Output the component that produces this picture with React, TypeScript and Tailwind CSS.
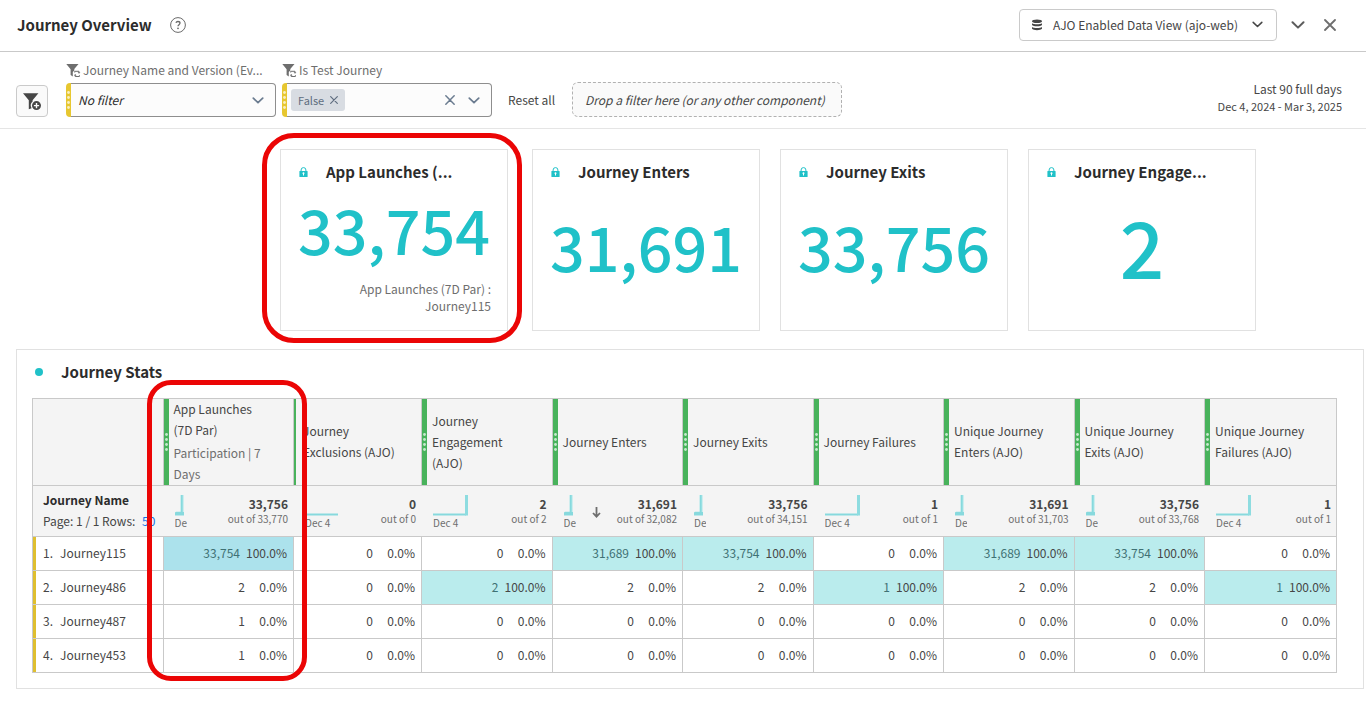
import React from "react";

type Spark = "peak" | "step" | "flat";

interface Metric {
  lines: string[];
  note?: string[];
  spark: Spark;
  axis: string;
  total: string;
  outOf: string;
  sorted?: boolean;
  cells: [string, string][];
}

const journeys = ["Journey115", "Journey486", "Journey487", "Journey453"];

const metrics: Metric[] = [
  {
    lines: ["App Launches", "(7D Par)"],
    note: ["Participation | 7", "Days"],
    spark: "peak",
    axis: "De",
    total: "33,756",
    outOf: "out of 33,770",
    cells: [["33,754", "100.0%"], ["2", "0.0%"], ["1", "0.0%"], ["1", "0.0%"]],
  },
  {
    lines: ["Journey", "Exclusions (AJO)"],
    spark: "flat",
    axis: "Dec 4",
    total: "0",
    outOf: "out of 0",
    cells: [["0", "0.0%"], ["0", "0.0%"], ["0", "0.0%"], ["0", "0.0%"]],
  },
  {
    lines: ["Journey", "Engagement", "(AJO)"],
    spark: "step",
    axis: "Dec 4",
    total: "2",
    outOf: "out of 2",
    cells: [["0", "0.0%"], ["2", "100.0%"], ["0", "0.0%"], ["0", "0.0%"]],
  },
  {
    lines: ["Journey Enters"],
    spark: "peak",
    axis: "De",
    total: "31,691",
    outOf: "out of 32,082",
    sorted: true,
    cells: [["31,689", "100.0%"], ["2", "0.0%"], ["0", "0.0%"], ["0", "0.0%"]],
  },
  {
    lines: ["Journey Exits"],
    spark: "peak",
    axis: "De",
    total: "33,756",
    outOf: "out of 34,151",
    cells: [["33,754", "100.0%"], ["2", "0.0%"], ["0", "0.0%"], ["0", "0.0%"]],
  },
  {
    lines: ["Journey Failures"],
    spark: "step",
    axis: "Dec 4",
    total: "1",
    outOf: "out of 1",
    cells: [["0", "0.0%"], ["1", "100.0%"], ["0", "0.0%"], ["0", "0.0%"]],
  },
  {
    lines: ["Unique Journey", "Enters (AJO)"],
    spark: "peak",
    axis: "De",
    total: "31,691",
    outOf: "out of 31,703",
    cells: [["31,689", "100.0%"], ["2", "0.0%"], ["0", "0.0%"], ["0", "0.0%"]],
  },
  {
    lines: ["Unique Journey", "Exits (AJO)"],
    spark: "peak",
    axis: "De",
    total: "33,756",
    outOf: "out of 33,768",
    cells: [["33,754", "100.0%"], ["2", "0.0%"], ["0", "0.0%"], ["0", "0.0%"]],
  },
  {
    lines: ["Unique Journey", "Failures (AJO)"],
    spark: "step",
    axis: "Dec 4",
    total: "1",
    outOf: "out of 1",
    cells: [["0", "0.0%"], ["1", "100.0%"], ["0", "0.0%"], ["0", "0.0%"]],
  },
];

function Chevron({ className }: { className: string }) {
  return (
    <svg viewBox="0 0 14 8" fill="none" stroke="currentColor" strokeWidth="2" strokeLinecap="round" strokeLinejoin="round" className={className} aria-hidden="true">
      <path d="M1.5 1.3 7 6.6l5.500-5.300" />
    </svg>
  );
}

function Cross({ className }: { className: string }) {
  return (
    <svg viewBox="0 0 12 12" fill="none" stroke="currentColor" strokeWidth="1.8" strokeLinecap="round" className={className} aria-hidden="true">
      <path d="M1 1l10 10M11 1 1 11" />
    </svg>
  );
}

function FunnelSync() {
  return (
    <svg viewBox="0 0 15 15" className="h-[15px] w-[15px] shrink-0 text-[#6e6e6e]" aria-hidden="true">
      <path d="M.3 1h12.200L8.300 6v1.500L6.800 9v4.500L4.600 12V6.200z" fill="currentColor" />
      <g fill="none" stroke="currentColor" strokeWidth="1">
        <path d="M8.700 9.500V8.300h4.300v1.400M13.400 12.200v1.300H9.200V12" />
      </g>
      <path d="M11.600 9.200h2.800L13 10.800zM7.800 12.500h2.800L9.200 10.900z" fill="currentColor" />
    </svg>
  );
}

function FunnelAdd() {
  return (
    <svg viewBox="0 0 20 20" className="h-5 w-5 text-[#464646]" aria-hidden="true">
      <path d="M1 2.200h15.400L10.600 9.300v1.200A5.300 5.300 0 0 0 9.600 17.200L6.800 18.300V9.300z" fill="currentColor" />
      <circle cx="14.500" cy="14.600" r="4.500" fill="currentColor" />
      <path d="M14.500 12v5.200M11.900 14.600h5.200" stroke="#fafafa" strokeWidth="1.400" />
    </svg>
  );
}

function Help() {
  return (
    <svg viewBox="0 0 16 16" fill="none" className="h-4 w-4 text-[#6a6a6a]" aria-hidden="true">
      <circle cx="8" cy="8" r="7.400" stroke="currentColor" strokeWidth="1" />
      <path d="M5.900 5.700C6.300 4.800 7 4.500 7.900 4.500c1.200 0 2.100.6 2.100 1.600 0 1.500-2 1.600-2 3.200" stroke="currentColor" strokeWidth="1.300" />
      <circle cx="8" cy="11.300" r=".9" fill="currentColor" />
    </svg>
  );
}

function Database() {
  return (
    <svg viewBox="0 0 12 12" className="h-3 w-3 shrink-0 text-[#464646]" aria-hidden="true">
      <ellipse cx="6" cy="2.300" rx="5" ry="1.800" fill="currentColor" />
      <path d="M1 4.300c1.500 1.300 8.500 1.300 10 0v1.700c-1.200 1.700-8.800 1.700-10 0zM1 8c1.500 1.300 8.500 1.300 10 0v1.800c-1.200 1.900-8.800 1.900-10 0z" fill="currentColor" />
    </svg>
  );
}

function Lock() {
  return (
    <svg viewBox="0 0 9 10" className="h-[10px] w-[9px] shrink-0 text-[#20c1c8]" aria-hidden="true">
      <path d="M2.100 4.500V3a2.400 2.400 0 0 1 4.800 0v1.500" fill="none" stroke="currentColor" strokeWidth="1" />
      <rect x=".4" y="4" width="8.200" height="6" rx=".6" fill="currentColor" />
      <path d="M4.500 5.300a.9.9 0 0 1 .5 1.700V8.500H4V7a.9.9 0 0 1 .5-1.700z" fill="#fff" />
    </svg>
  );
}

function Grip() {
  return (
    <svg viewBox="0 0 3 18" className="h-[18px] w-[3px]" fill="#fff" fillOpacity=".7" aria-hidden="true">
      <circle cx="1.500" cy="1.500" r="1.400" />
      <circle cx="1.500" cy="6.500" r="1.400" />
      <circle cx="1.500" cy="11.500" r="1.400" />
      <circle cx="1.500" cy="16.500" r="1.400" />
    </svg>
  );
}

function Sparkline({ kind }: { kind: Spark }) {
  if (kind === "peak") {
    return (
      <svg viewBox="0 0 36 21" className="block h-[21px] w-9" aria-hidden="true">
        <path d="M5.500 0h3v20h-3z" fill="#a9e6e9" />
        <path d="M0 20.500V17.500l1-.8h5V0h1.500v17H9v3.500z" fill="#87d9dd" />
      </svg>
    );
  }
  return (
    <svg viewBox="0 0 36 21" className="block h-[21px] w-9" aria-hidden="true">
      <path d="M0 19.500h33" stroke="#87d9dd" strokeWidth="2" />
      {kind === "step" && <path d="M33.500 0v20.500" stroke="#8edce0" strokeWidth="3" />}
    </svg>
  );
}

function Callout({ className }: { className: string }) {
  return <div aria-hidden="true" className={`pointer-events-none absolute border-5 border-[#eb0505] ${className}`} />;
}

function YellowHandle() {
  return (
    <span className="flex w-[5px] shrink-0 items-center justify-center rounded-l bg-[#e7c730]">
      <Grip />
    </span>
  );
}

interface CardProps {
  title: string;
  value: string;
  size: string;
  caption?: string[];
  highlighted?: boolean;
}

function SummaryCard({ title, value, size, caption, highlighted }: CardProps) {
  return (
    <section className={`relative flex h-[182px] w-[228px] flex-col border border-[#e1e1e1] bg-white pb-4 ${highlighted ? "mr-1" : ""}`}>
      <header className="flex items-center pt-2.5 pl-[18px]">
        <Lock />
        <h2 className="ml-[18px] text-[15px] leading-6 font-bold whitespace-nowrap text-[#2c2c2c]">{title}</h2>
      </header>
      <p className={`flex flex-1 items-center justify-center pb-2 leading-none font-medium text-[#20c1c8] ${size}`}>{value}</p>
      {caption && (
        <p className="pr-4 text-right leading-[17px] text-[#6e6e6e]">
          {caption.map((line) => (
            <span key={line} className="block">{line}</span>
          ))}
        </p>
      )}
      {highlighted && <Callout className="-top-[17px] -right-[15px] -bottom-[13px] -left-[19px] rounded-[32px]" />}
    </section>
  );
}

const columnWidth = (index: number) => {
  if (index === 1) return "w-[128px]";
  return index === metrics.length - 1 ? "w-[132px]" : "";
};

export default function App() {
  return (
    <main className="min-h-screen bg-white font-['Noto_Sans_CJK_SC','Noto_Sans',sans-serif] text-[12px] leading-5 text-[#464646]">
      <header className="flex h-[52px] items-center border-b border-[#c9c9c9] pr-[30px] pb-0.5 pl-[17px]">
        <h1 className="text-[15px] leading-6 font-bold text-[#2c2c2c]">Journey Overview</h1>
        <button type="button" aria-label="Help" className="ml-[18px]">
          <Help />
        </button>
        <button type="button" className="ml-auto flex h-8 items-center rounded border border-[#cacaca] pr-[13px] pl-[11px]">
          <Database />
          <span className="mr-3.5 ml-2.5">AJO Enabled Data View (ajo-web)</span>
          <Chevron className="h-[7px] w-[11px]" />
        </button>
        <button type="button" aria-label="Collapse panel" className="ml-3.5 text-[#5c5c5c]">
          <Chevron className="h-2 w-[14px]" />
        </button>
        <button type="button" aria-label="Close panel" className="ml-[19px] text-[#6e6e6e]">
          <Cross className="h-3 w-3" />
        </button>
      </header>

      <div className="flex items-end border-b border-[#e5e5e5] px-4 pt-2 pb-[11px]">
        <button type="button" aria-label="Add filter" className="flex h-8 w-8 items-center justify-center rounded border border-[#cacaca] bg-[#fafafa]">
          <FunnelAdd />
        </button>

        <div className="ml-[18px] w-[210px]">
          <label htmlFor="journey-name" className="flex items-center gap-0.5 whitespace-nowrap text-[#6e6e6e]">
            <FunnelSync />
            <span>Journey Name and Version (Ev...</span>
          </label>
          <div className="mt-[3px] flex h-[34px]">
            <YellowHandle />
            <span className="relative flex flex-1 items-center rounded-r border border-l-0 border-[#8e8e8e] bg-[#fcfcfc]">
              <select id="journey-name" className="w-full appearance-none bg-transparent pl-[7px] text-[#2c2c2c] italic outline-none">
                <option>No filter</option>
              </select>
              <Chevron className="pointer-events-none absolute right-[11px] h-[7px] w-3 text-[#6b7c90]" />
            </span>
          </div>
        </div>

        <div className="ml-1.5 w-[210px]">
          <label htmlFor="test-journey" className="flex items-center gap-0.5 text-[#6e6e6e]">
            <FunnelSync />
            <span>Is Test Journey</span>
          </label>
          <div className="mt-[3px] flex h-[34px]">
            <YellowHandle />
            <div className="flex flex-1 items-center rounded-r border border-l-0 border-[#8e8e8e] bg-[#fcfcfc] pr-[11px]">
              <span className="ml-1 flex h-[22px] shrink-0 items-center gap-1.5 rounded-[3px] bg-[#d8dce2] px-[7px] text-[11px] text-[#5f6e80]">
                False
                <button type="button" aria-label="Remove False">
                  <Cross className="h-2 w-2" />
                </button>
              </span>
              <input id="test-journey" type="text" className="w-0 min-w-0 flex-1 bg-transparent outline-none" />
              <button type="button" aria-label="Clear selection" className="text-[#6b7c90]">
                <Cross className="h-2.5 w-2.5" />
              </button>
              <button type="button" aria-label="Open list" className="ml-[13px] text-[#6b7c90]">
                <Chevron className="h-[7px] w-3" />
              </button>
            </div>
          </div>
        </div>

        <button type="button" className="ml-4 h-[34px] shrink-0">Reset all</button>
        <div className="ml-[17px] flex h-[35px] w-[270px] items-center rounded-md border border-dashed border-[#b1b1b1] bg-[#fafafa] pl-3 whitespace-nowrap italic">
          Drop a filter here (or any other component)
        </div>
        <button type="button" className="mr-2 ml-auto flex flex-col items-end pb-[3px]">
          <span className="leading-[18px]">Last 90 full days</span>
          <span className="text-[11px] leading-4">Dec 4, 2024 - Mar 3, 2025</span>
        </button>
      </div>

      <div className="flex gap-5 pt-5 pl-[280px]">
        <SummaryCard title="App Launches (..." value="33,754" size="text-[61px]" caption={["App Launches (7D Par) :", "Journey115"]} highlighted />
        <SummaryCard title="Journey Enters" value="31,691" size="text-[61px]" />
        <SummaryCard title="Journey Exits" value="33,756" size="text-[61px]" />
        <SummaryCard title="Journey Engage..." value="2" size="text-[78px]" />
      </div>

      <section className="mt-[18px] mr-0.5 ml-4 border border-[#e1e1e1] pt-2.5 pr-[26px] pb-[15px] pl-[15px]">
        <header className="flex items-center pl-[3px]">
          <span className="h-2 w-2 rounded-full bg-[#20c1c8]" />
          <h2 className="ml-[18px] text-[15px] leading-6 font-bold text-[#2c2c2c]">Journey Stats</h2>
        </header>

        <div className="relative mt-3.5">
          <table className="w-full table-fixed border-separate border-spacing-0 border-r border-b border-[#c9c9c9]">
            <colgroup>
              <col />
              {metrics.map((metric, index) => (
                <col key={metric.lines.join(" ")} className={columnWidth(index)} />
              ))}
            </colgroup>
            <thead className="bg-[#f4f4f4]">
              <tr className="h-[87px]">
                <td className="border-t border-l border-[#c9c9c9]" />
                {metrics.map((metric, index) => (
                  <th key={metric.lines.join(" ")} scope="col" className="h-[87px] border-t border-l border-[#c9c9c9] p-0 text-left font-normal">
                    <div className="flex h-[86px] items-center">
                      <span className={`flex h-full shrink-0 items-center justify-center bg-[#48b25b] ${index === 1 ? "mr-[7px] w-0.5" : "mr-[5px] w-[5px]"}`}>
                        {index !== 1 && <Grip />}
                      </span>
                      <span className="pb-0.5 whitespace-nowrap">
                        {metric.lines.map((line) => (
                          <span key={line} className="block leading-[21px]">{line}</span>
                        ))}
                        {metric.note && (
                          <span className="mt-0.5 block text-[#6e6e6e]">
                            {metric.note.map((line) => (
                              <span key={line} className="block leading-[21px]">{line}</span>
                            ))}
                          </span>
                        )}
                      </span>
                    </div>
                  </th>
                ))}
              </tr>
              <tr className="h-[51px]">
                <th scope="col" className="border-t border-l border-[#c9c9c9] p-0 pb-0.5 pl-2.5 text-left font-normal whitespace-nowrap">
                  <span className="block leading-[21px] font-bold text-[#2c2c2c]">Journey Name</span>
                  <span className="block leading-[21px]">
                    Page: 1 / 1 Rows: <button type="button" className="ml-1 text-[#1473e6]">50</button>
                  </span>
                </th>
                {metrics.map((metric) => (
                  <td key={metric.lines.join(" ")} className="border-t border-[#c9c9c9] p-0">
                    <div className="flex items-center justify-between pr-[5px] pl-3">
                      <div className="flex items-center pt-0.5">
                        <div className={`overflow-hidden whitespace-nowrap ${metric.spark === "peak" ? "w-3" : "w-9"}`}>
                          <Sparkline kind={metric.spark} />
                          <span className="block text-[10px] leading-[14px] text-[#6e6e6e]">{metric.axis}</span>
                        </div>
                        {metric.sorted && (
                          <svg viewBox="0 0 9 11" className="ml-4 h-[11px] w-[9px]" fill="none" stroke="#6e6e6e" strokeWidth="1.800" role="img" aria-label="Sorted descending">
                            <path d="M4.500 0v9.500M1 6l3.500 3.700L8 6" />
                          </svg>
                        )}
                      </div>
                      <div className="text-right whitespace-nowrap">
                        <span className="block leading-4 font-bold">{metric.total}</span>
                        <span className="block text-[10px] leading-[14px] text-[#6e6e6e]">{metric.outOf}</span>
                      </div>
                    </div>
                  </td>
                ))}
              </tr>
            </thead>
            <tbody>
              {journeys.map((journey, row) => (
                <tr key={journey} className="h-[34px]">
                  <th scope="row" className="h-[34px] border-t border-l border-[#c9c9c9] p-0 text-left font-normal">
                    <div className="flex h-[33px] items-center border-l-3 border-[#dfbf2f] pb-0.5 pl-[7px]">
                      {row + 1}.<span className="ml-[7px]">{journey}</span>
                    </div>
                  </th>
                  {metrics.map((metric, column) => {
                    const [count, share] = metric.cells[row];
                    const full = share === "100.0%";
                    const fill = full ? (column === 0 ? "bg-[#ace2ec]" : "bg-[#baeced]") : "";
                    return (
                      <td key={metric.lines.join(" ")} className={`border-t border-l border-[#c9c9c9] p-0 ${fill}`}>
                        <div className="flex justify-end gap-1.5 pr-1.5 pb-0.5">
                          <span className={full ? "text-[#3f7174]" : ""}>{count}</span>
                          <span className="min-w-9 text-right">{share}</span>
                        </div>
                      </td>
                    );
                  })}
                </tr>
              ))}
            </tbody>
          </table>
          <Callout className="-top-[18px] -bottom-2 left-[calc(10%-16px)] w-[calc(10%+30px)] rounded-3xl" />
        </div>
      </section>
    </main>
  );
}
